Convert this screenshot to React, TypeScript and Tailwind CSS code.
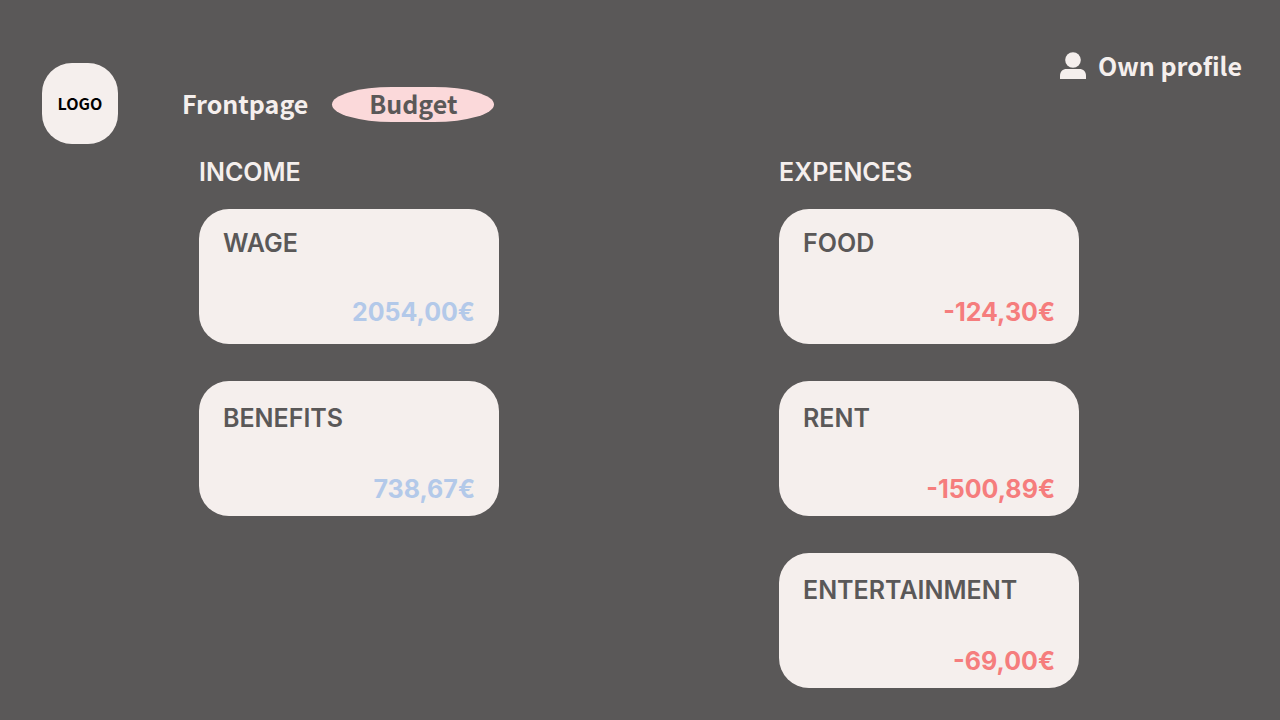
type Entry = { name: string; amount: string };

const income: Entry[] = [
  { name: "WAGE", amount: "2054,00€" },
  { name: "BENEFITS", amount: "738,67€" },
];

const expences: Entry[] = [
  { name: "FOOD", amount: "-124,30€" },
  { name: "RENT", amount: "-1500,89€" },
  { name: "ENTERTAINMENT", amount: "-69,00€" },
];

function ProfileIcon() {
  return (
    <svg width="26" height="27" viewBox="0 0 26 27" fill="currentColor" aria-hidden="true">
      <circle cx="13" cy="8" r="7.8" />
      <path d="M0 27v-3.5C0 19.500 2.800 16.900 6.500 16.900h13c3.700 0 6.500 2.600 6.500 6.600V27z" />
    </svg>
  );
}

function Section({ title, entries, amountColor }: { title: string; entries: Entry[]; amountColor: string }) {
  return (
    <section className="w-[300px]">
      <h2 className="text-[#f5efed]">{title}</h2>
      <ul className="mt-5 flex flex-col gap-[37px]">
        {entries.map((entry) => (
          <li
            key={entry.name}
            className="flex h-[135px] flex-col justify-between rounded-[30px] bg-[#f5efed] px-6 pt-5 pb-2.5 first:pt-[17px] first:pb-[15px]"
          >
            <h3 className="text-[#5a5858]">{entry.name}</h3>
            <p className={`text-right font-bold ${amountColor}`}>{entry.amount}</p>
          </li>
        ))}
      </ul>
    </section>
  );
}

export default function App() {
  return (
    <div className="min-h-screen bg-[#5a5858] pb-8 text-[25px] leading-[34px] font-semibold">
      <header className="flex items-start justify-between pt-12 pr-[38px] pl-[42px] font-['Noto_Sans_CJK_SC',sans-serif] font-bold text-[#f5efed]">
        <div className="flex items-center pt-[15px]">
          <a
            href="#home"
            className="flex h-[81px] w-[76px] items-center justify-center rounded-[30px] bg-[#f5efed] pb-0.5 text-base text-black"
          >
            LOGO
          </a>
          <nav className="ml-16 flex items-center gap-6 pt-0.5">
            <a href="#frontpage" className="flex h-[35px] items-center pb-1">
              Frontpage
            </a>
            <a
              href="#budget"
              aria-current="page"
              className="flex h-[35px] w-[162px] items-center justify-center rounded-[37%/50%] bg-[#fbd9da] pb-1 text-[#5a5858]"
            >
              Budget
            </a>
          </nav>
        </div>
        <a href="#profile" className="flex items-center gap-3">
          <ProfileIcon />
          Own profile
        </a>
      </header>
      <main className="flex justify-between gap-10 pt-[11px] pr-[201px] pl-[199px] font-['Inter',sans-serif]">
        <Section title="INCOME" entries={income} amountColor="text-[#b3c9e9]" />
        <Section title="EXPENCES" entries={expences} amountColor="text-[#f57d7d]" />
      </main>
    </div>
  );
}
